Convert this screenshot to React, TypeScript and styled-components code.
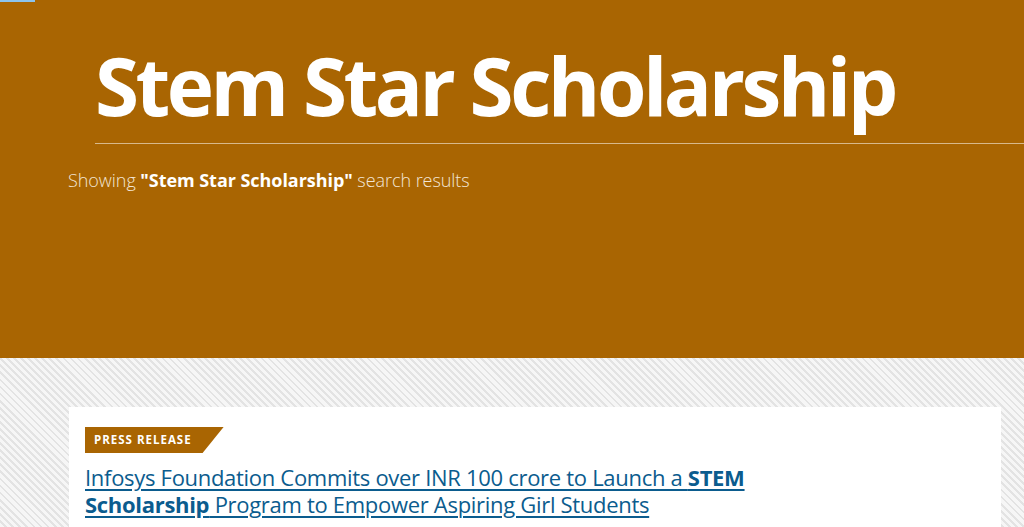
import styled, { createGlobalStyle } from 'styled-components';

const GlobalStyle = createGlobalStyle`
  html, body {
    margin: 0;
    padding: 0;
    background: #f4f4f4;
    font-family: 'Open Sans', 'Noto Sans', sans-serif;
  }
`;

const SkipBar = styled.div`
  position: absolute;
  top: 0;
  left: 0;
  width: 35px;
  height: 2px;
  background: #8cc4ee;
`;

const Banner = styled.header`
  background: #a96502;
  height: 358px;
  box-sizing: border-box;
  padding-top: 30px;
  overflow: hidden;
`;

const TitleBlock = styled.div`
  margin-left: 95px;
  border-bottom: 1px solid rgba(255, 255, 255, 0.55);
  padding-bottom: 3px;
`;

const Title = styled.h1`
  margin: 0;
  color: #ffffff;
  font-size: 80px;
  font-weight: 700;
  line-height: 110px;
  letter-spacing: -3.5px;
`;

const Summary = styled.p`
  margin: 24px 0 0 68px;
  color: #f3e6d6;
  font-size: 18px;
  font-weight: 300;
  letter-spacing: -0.05px;

  strong {
    color: #ffffff;
    font-weight: 700;
  }
`;

const Results = styled.main`
  min-height: 169px;
  padding: 49px 23px 0 69px;
  background-color: #f6f6f6;
  background-image: repeating-linear-gradient(
    45deg,
    #f6f6f6 0px,
    #f6f6f6 3px,
    #e3e3e3 3px,
    #e3e3e3 5px
  );
`;

const Card = styled.article`
  background: #ffffff;
  padding: 20px 16px 40px;
`;

const Badge = styled.span`
  display: inline-block;
  background: #a96502;
  color: #ffffff;
  font-size: 11.5px;
  font-weight: 700;
  letter-spacing: 1px;
  line-height: 26px;
  padding: 0 32px 0 9px;
  clip-path: polygon(0 0, 100% 0, calc(100% - 21px) 100%, 0 100%);
`;

const ResultLink = styled.a`
  display: block;
  margin-top: 11px;
  max-width: 700px;
  color: #0b5c8e;
  font-size: 22px;
  line-height: 27px;
  letter-spacing: -0.3px;
  text-decoration: underline;
  text-underline-offset: 3px;
  text-decoration-thickness: 2px;

  strong {
    font-weight: 700;
  }
`;

export default function App() {
  return (
    <>
      <GlobalStyle />
      <SkipBar />
      <Banner>
        <TitleBlock>
          <Title>Stem Star Scholarship</Title>
        </TitleBlock>
        <Summary>
          Showing <strong>"Stem Star Scholarship"</strong> search results
        </Summary>
      </Banner>
      <Results>
        <Card>
          <Badge>PRESS RELEASE</Badge>
          <ResultLink href="#">
            Infosys Foundation Commits over INR 100 crore to Launch a <strong>STEM Scholarship</strong> Program to
            Empower Aspiring Girl Students
          </ResultLink>
        </Card>
      </Results>
    </>
  );
}
